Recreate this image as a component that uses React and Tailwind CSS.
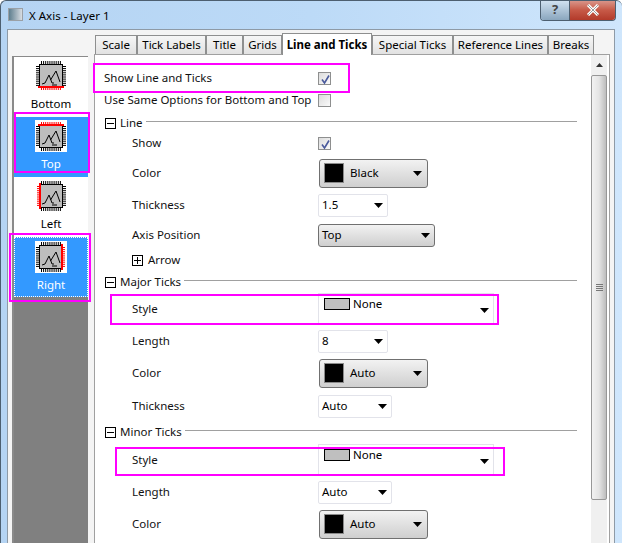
import React from 'react'

const font = { fontFamily: '"Noto Sans", "Open Sans", sans-serif' }

const AxisIcon = ({ side }) => {
  const steps = [0, 1, 2, 3, 4, 5, 6, 7, 8, 9]
  return (
    <svg width="32" height="32" viewBox="0 0 32 32" className="block bg-white">
      <rect x="4.5" y="4.5" width="23" height="23" fill="#bdbdbd" stroke="#000" />
      {steps.map((i) => {
        const p = 6.5 + i * 2.1
        return (
          <g key={i}>
            <line x1={p} x2={p} y1={side === 'top' ? 2 : 1} y2="4" stroke={side === 'top' ? '#f00' : '#000'} />
            <line x1={p} x2={p} y1="28" y2={side === 'bottom' ? 30 : 31} stroke={side === 'bottom' ? '#f00' : '#000'} />
            <line y1={p} y2={p} x1={side === 'left' ? 2 : 1} x2="4" stroke={side === 'left' ? '#f00' : '#000'} />
            <line y1={p} y2={p} x1="28" x2={side === 'right' ? 30 : 31} stroke={side === 'right' ? '#f00' : '#000'} />
          </g>
        )
      })}
      {side === 'top' && <rect x="3" y="4" width="26" height="2" fill="#f00" />}
      {side === 'bottom' && <rect x="3" y="26" width="26" height="2" fill="#f00" />}
      {side === 'left' && <rect x="4" y="3" width="2" height="26" fill="#f00" />}
      {side === 'right' && <rect x="26" y="3" width="2" height="26" fill="#f00" />}
      <polyline points="7,24 10,23 14,15 17,23 19,23" fill="none" stroke="#000" />
      <polyline points="15.5,20 21,11 25,22" fill="none" stroke="#000" />
      <line x1="17" x2="22" y1="25" y2="25" stroke="#000" />
    </svg>
  )
}

const Arrow = () => (
  <svg width="9" height="5" viewBox="0 0 9 5" className="block shrink-0">
    <polygon points="0,0 9,0 4.5,5" fill="#000" />
  </svg>
)

const Check = ({ checked }) => (
  <div className="w-[13px] h-[13px] border border-[#8e8f8f] bg-gradient-to-br from-[#dcdcdc] to-[#fafafa] p-px">
    {checked && (
      <svg width="11" height="11" viewBox="0 0 11 11" className="block">
        <path d="M2 5.5 L4.5 9 L9 1.5" fill="none" stroke="#4a5a9c" strokeWidth="1.6" />
      </svg>
    )}
  </div>
)

const Combo = ({ value, width }) => (
  <div className={`${width} h-[23px] flex items-center justify-between pl-[3px] pr-[4px] bg-white border border-[#e2e3ea] rounded-[2px] text-black`}>
    <span>{value}</span>
    <Arrow />
  </div>
)

const ColorButton = ({ value }) => (
  <div className="w-[109px] h-[29px] ml-px flex items-center pl-1 pr-[5px] border border-[#707070] rounded-[3px] bg-gradient-to-b from-[#f2f2f2] to-[#cfcfcf] text-black">
    <div className="w-5 h-5 bg-black border border-[#8a8a8a] shrink-0" />
    <span className="ml-[6px] flex-1">{value}</span>
    <Arrow />
  </div>
)

const SelectButton = ({ value }) => (
  <div className="w-[117px] h-[23px] flex items-center justify-between pl-[3px] pr-[4px] border border-[#707070] rounded-[3px] bg-gradient-to-b from-[#f2f2f2] to-[#cfcfcf] text-black">
    <span>{value}</span>
    <Arrow />
  </div>
)

const StyleCombo = () => (
  <div className="relative w-[176px] h-[31px] mt-[-1px] flex items-start pt-[3px] pl-[5px] bg-white border-l border-r border-t border-[#e2e3ea] text-black">
    <div className="w-[26px] h-3 mt-px bg-[#bfbfbf] border border-black" />
    <span className="ml-[3px] leading-[14px]">None</span>
    <div className="absolute right-[4px] top-[14px]">
      <Arrow />
    </div>
  </div>
)

const Row = ({ label, mt, indent, children }) => (
  <div className={`flex items-center h-5 ${mt}`}>
    <div className={`w-[223px] shrink-0 whitespace-nowrap ${indent ? 'pl-[37px]' : 'pl-[9px]'}`}>{label}</div>
    {children}
  </div>
)

const Group = ({ label, mt }) => (
  <div className={`flex items-center h-5 pl-[10px] ${mt}`}>
    <div className="relative w-[11px] h-[11px] border border-black bg-white shrink-0">
      <div className="absolute left-[1px] right-[1px] top-[4px] h-px bg-black" />
    </div>
    <span className="ml-1 whitespace-nowrap">{label}</span>
    <div className="ml-[3px] w-full mr-[14px] h-px bg-[#a0a0a0] mb-[3px]" />
  </div>
)

const sideItems = [
  { name: 'Bottom', side: 'bottom' },
  { name: 'Top', side: 'top', active: true },
  { name: 'Left', side: 'left' },
  { name: 'Right', side: 'right', active: true, focus: true },
]

const tabs = [
  { name: 'Scale', w: 'w-[42px]' },
  { name: 'Tick Labels', w: 'w-[69px]' },
  { name: 'Title', w: 'w-[37px]' },
  { name: 'Grids', w: 'w-[39px]' },
  { name: 'Line and Ticks', w: 'w-[90px]', active: true },
  { name: 'Special Ticks', w: 'w-[81px]' },
  { name: 'Reference Lines', w: 'w-[95px]' },
  { name: 'Breaks', w: 'w-[46px]' },
]

const App = () => {
  return (
    <div style={font} className="relative w-[622px] h-[543px] overflow-hidden bg-gradient-to-r from-[#b5d4f3] via-[#bcdaf7] to-[#cfe6fc] text-[11.5px] text-[#111] flex flex-col rounded-t-[6px] border-t border-l border-[#4d5f70]">
      {/* title bar */}
      <div className="h-[28px] shrink-0 flex items-start relative">
        <div className="ml-[7px] mt-[7px] w-[15px] h-[13px] border border-[#9aa0a6] bg-gradient-to-r from-[#5f7f8f] to-[#d8dde2]" />
        <div className="ml-[6px] mt-[5px] text-[11.5px] leading-[20px] text-black">X Axis - Layer 1</div>
        <div className="absolute right-[6px] top-[-1px] flex h-[21px] rounded-b-[4px] overflow-hidden border border-t-0 border-[#4d5f70]">
          <div className="w-[28px] flex items-center justify-center bg-gradient-to-b from-[#d4e4f2] to-[#8aa6be] text-[13px] font-bold text-[#444]">?</div>
          <div className="w-[46px] flex items-center justify-center bg-gradient-to-b from-[#d99a90] via-[#c75a48] to-[#b23a2a] border-l border-[#4d5f70]">
            <svg width="14" height="12" viewBox="0 0 14 12">
              <path d="M2 1 L12 11 M12 1 L2 11" stroke="#fff" strokeWidth="3" />
              <path d="M2 1 L12 11 M12 1 L2 11" stroke="#555" strokeWidth="0.6" />
            </svg>
          </div>
        </div>
      </div>

      {/* client area */}
      <div className="flex-1 min-h-0 ml-[6px] w-[608px] bg-[#f4f4f4] border-l border-r border-t border-[#8e9aa6] flex">
        {/* axis list */}
        <div className="ml-1 mt-[26px] w-[76px] shrink-0 border-l-2 border-t border-[#8a8a8a] bg-[#808080] flex flex-col">
          {sideItems.map((item) => (
            <div
              key={item.name}
              className={`h-[60px] flex flex-col items-center pt-[3px] ${item.active ? 'bg-[#3399ff] text-white' : 'bg-white text-black'} ${item.focus ? 'border border-dotted border-white' : ''}`}
            >
              <AxisIcon side={item.side} />
              <div className="mt-[4px] leading-4">{item.name}</div>
            </div>
          ))}
        </div>

        {/* tabs and page */}
        <div className="ml-[6px] w-[516px] shrink-0 flex flex-col">
          <div className="h-[24px] shrink-0 flex items-end pl-[1px]">
            {tabs.map((tab) => (
              <div
                key={tab.name}
                className={`${tab.w} shrink-0 flex items-center justify-center border border-[#8e8f8f] text-black whitespace-nowrap ${tab.active ? 'h-[22px] font-bold bg-white border-b-0 -mb-px z-10 relative' : 'h-[19px] border-b-0 bg-gradient-to-b from-[#f6f6f6] to-[#e2e2e2]'}`}
              >
                {tab.name}
              </div>
            ))}
          </div>
          <div className="flex-1 min-h-0 bg-white border-l border-r border-t border-[#a0a0a0] flex">
            <div className="w-[496px] shrink-0 pt-[13px] text-[#111]">
              <Row label="Show Line and Ticks"><Check checked /></Row>
              <Row label="Use Same Options for Bottom and Top" mt="mt-[2px]"><Check /></Row>
              <Group label="Line" mt="mt-[3px]" />
              <Row label="Show" indent><Check checked /></Row>
              <Row label="Color" indent mt="mt-[10px]"><ColorButton value="Black" /></Row>
              <Row label="Thickness" indent mt="mt-[12px]"><Combo value="1.5" width="w-[70px]" /></Row>
              <Row label="Axis Position" indent mt="mt-[10px]"><SelectButton value="Top" /></Row>
              <div className="flex items-center h-5 mt-[5px] pl-[37px]">
                <div className="relative w-[11px] h-[11px] border border-black bg-white shrink-0">
                  <div className="absolute left-[1px] right-[1px] top-[4px] h-px bg-black" />
                  <div className="absolute top-[1px] bottom-[1px] left-[4px] w-px bg-black" />
                </div>
                <span className="ml-[5px]">Arrow</span>
              </div>
              <Group label="Major Ticks" mt="mt-[2px]" />
              <Row label="Style" indent mt="mt-[7px]"><StyleCombo /></Row>
              <Row label="Length" indent mt="mt-[12px]"><Combo value="8" width="w-[70px]" /></Row>
              <Row label="Color" indent mt="mt-[12px]"><ColorButton value="Auto" /></Row>
              <Row label="Thickness" indent mt="mt-[13px]"><Combo value="Auto" width="w-[74px]" /></Row>
              <Group label="Minor Ticks" mt="mt-[6px]" />
              <Row label="Style" indent mt="mt-[8px]"><StyleCombo /></Row>
              <Row label="Length" indent mt="mt-[12px]"><Combo value="Auto" width="w-[74px]" /></Row>
              <Row label="Color" indent mt="mt-[12px]"><ColorButton value="Auto" /></Row>
            </div>

            {/* scrollbar */}
            <div className="w-[16px] shrink-0 bg-[#f0f0f0] flex flex-col">
              <div className="h-[20px] flex items-center justify-center bg-[#f0f0f0]">
                <svg width="7" height="4" viewBox="0 0 7 4"><polygon points="0,4 7,4 3.5,0" fill="#333" /></svg>
              </div>
              <div className="h-[425px] border border-[#979797] rounded-[2px] bg-gradient-to-r from-[#f2f2f2] via-[#e4e4e4] to-[#bdbdbd] flex items-center justify-center">
                <div className="w-[7px] flex flex-col gap-px">
                  <div className="h-px bg-[#777]" />
                  <div className="h-px bg-[#777]" />
                  <div className="h-px bg-[#777]" />
                  <div className="h-px bg-[#777]" />
                </div>
              </div>
            </div>
          </div>
        </div>
      </div>

      {/* magenta call-outs */}
      <div className="absolute left-[92px] top-[62px] w-[257px] h-[30px] border-2 border-[#ff00ff]" />
      <div className="absolute left-[13px] top-[111px] w-[76px] h-[61px] border-2 border-[#ff00ff]" />
      <div className="absolute left-[8px] top-[232px] w-[82px] h-[69px] border-2 border-[#ff00ff]" />
      <div className="absolute left-[109px] top-[293px] w-[389px] h-[31px] border-2 border-[#ff00ff]" />
      <div className="absolute left-[114px] top-[446px] w-[390px] h-[29px] border-2 border-[#ff00ff]" />
    </div>
  )
}

export default App
